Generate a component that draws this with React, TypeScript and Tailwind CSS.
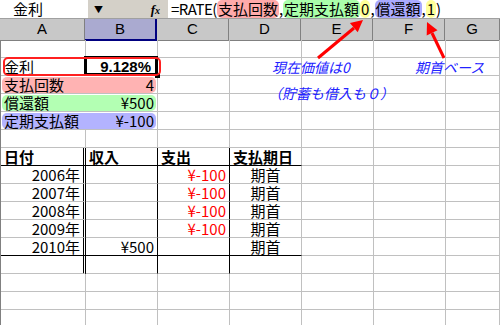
const jp = { fontFamily: '"MS PGothic", "Noto Sans CJK JP", "Liberation Sans", sans-serif' };

const cols = "grid grid-cols-[85px_72px_72px_72px_72px_72px_1fr]";

function Cell({ className = "", children }: { className?: string; children?: React.ReactNode }) {
  return (
    <div className={`h-full border-r border-b border-[#c0c0c0] px-[3px] leading-[17px] whitespace-nowrap overflow-visible ${className}`}>
      {children}
    </div>
  );
}

function EmptyRow() {
  return (
    <div className={`${cols} h-[18px]`}>
      {Array.from({ length: 7 }).map((_, i) => (
        <Cell key={i} />
      ))}
    </div>
  );
}

function Param({ label, value, bg }: { label: string; value: string; bg: string }) {
  return (
    <div className={`${cols} h-[18px]`}>
      <div className="col-span-2 h-full border-r border-b border-[#c0c0c0] px-[1px] pt-[1px]">
        <div className={`flex h-[16px] items-center justify-between rounded-[5px] px-[2px] leading-[16px] ${bg}`}>
          <span>{label}</span>
          <span>{value}</span>
        </div>
      </div>
      <Cell />
      <Cell />
      <Cell />
      <Cell />
      <Cell />
    </div>
  );
}

const years = ["2006年", "2007年", "2008年", "2009年"];

export default function App() {
  return (
    <div className="relative h-[325px] w-[500px] overflow-hidden bg-white text-[15px] text-black" style={jp}>
      {/* formula bar */}
      <div className="flex h-[19px] items-center border-b border-[#a0a0a0]">
        <div className="flex h-full w-[88px] items-center bg-white pl-[13px] text-[15px]">金利</div>
        <div className="flex h-full w-[80px] items-center justify-between bg-[#d4d0c8] pl-[6px] pr-[8px]">
          <span className="text-[9px] leading-none">▼</span>
          <span className="text-[13px] font-bold italic leading-none" style={{ fontFamily: '"Liberation Serif", serif' }}>
            f<span className="text-[10px]">x</span>
          </span>
        </div>
        <div className="flex h-full flex-1 items-center bg-white pl-[3px] text-[15px] leading-[18px]">
          <span className="tracking-[-0.5px]">=RATE(</span>
          <span className="rounded-[5px] bg-[#ffaaaa] px-[1px]">支払回数</span>
          <span>,</span>
          <span className="rounded-[5px] bg-[#aaffaa] px-[1px]">定期支払額</span>
          <span className="rounded-[5px] bg-[#ffff99] px-[1px]">0</span>
          <span>,</span>
          <span className="rounded-[5px] bg-[#aaaaff] px-[1px]">償還額</span>
          <span>,</span>
          <span className="rounded-[5px] bg-[#ffff99] px-[1px]">1</span>
          <span>)</span>
        </div>
      </div>

      {/* column headers */}
      <div className={`${cols} h-[21px] bg-[#c8c8c8] text-center leading-[20px]`} style={{ fontFamily: '"Liberation Sans", sans-serif' }}>
        {["A", "B", "C", "D", "E", "F", "G"].map((c) => (
          <div
            key={c}
            className={
              c === "B"
                ? "border-r-2 border-b-2 border-[#000080] bg-[#aaaad0]"
                : "border-r border-b border-[#808080]"
            }
          >
            {c}
          </div>
        ))}
      </div>

      {/* sheet body */}
      <div className="border-l border-[#808080]">
        <EmptyRow />

        <div className={`${cols} relative h-[18px]`}>
          <Cell>金利</Cell>
          <div className="relative h-full border-r border-b border-[#c0c0c0]">
            <div className="absolute -left-[2px] -top-[2px] -right-[1px] -bottom-[1px] border-[3px] border-black" />
            <div className="absolute -bottom-[3px] -right-[3px] h-[5px] w-[5px] bg-black" />
            <div className="relative pr-[6px] text-right font-bold leading-[17px]" style={{ fontFamily: '"Liberation Sans", sans-serif' }}>
              9.128%
            </div>
          </div>
          <Cell />
          <Cell />
          <Cell />
          <Cell />
          <Cell />
          <div className="pointer-events-none absolute left-[2px] top-[-1px] h-[19px] w-[158px] rounded-[5px] border-2 border-[#ff2020]" />
        </div>

        <Param label="支払回数" value="4" bg="bg-[#ffb3b3]" />
        <Param label="償還額" value="¥500" bg="bg-[#b3ffb3]" />
        <Param label="定期支払額" value="¥-100" bg="bg-[#b3b3ff]" />
        <EmptyRow />

        {/* table header */}
        <div className={`${cols} h-[18px] font-bold`}>
          <Cell className="border-r-[3px] border-r-black border-double border-b-black">日付</Cell>
          <Cell className="border-r-black border-b-black">収入</Cell>
          <Cell className="border-r-black border-b-black">支出</Cell>
          <Cell className="border-b-black">支払期日</Cell>
          <Cell />
          <Cell />
          <Cell />
        </div>

        {years.map((y) => (
          <div key={y} className={`${cols} h-[18px]`}>
            <Cell className="border-r-[3px] border-r-black border-double text-right">{y}</Cell>
            <Cell className="border-r-black" />
            <Cell className="border-r-black text-right text-[#ff0000]">¥-100</Cell>
            <Cell className="text-center">期首</Cell>
            <Cell />
            <Cell />
            <Cell />
          </div>
        ))}

        <div className={`${cols} h-[18px]`}>
          <Cell className="border-r-[3px] border-r-black border-double border-b-black text-right">2010年</Cell>
          <Cell className="border-r-black border-b-black text-right">¥500</Cell>
          <Cell className="border-r-black border-b-black" />
          <Cell className="border-b-black text-center">期首</Cell>
          <Cell />
          <Cell />
          <Cell />
        </div>

        <div className={`${cols} h-[18px]`}>
          <Cell className="border-r-[3px] border-r-black border-double" />
          <Cell className="border-r-black" />
          <Cell className="border-r-black" />
          <Cell />
          <Cell />
          <Cell />
          <Cell />
        </div>

        <EmptyRow />
        <EmptyRow />
        <EmptyRow />
        <EmptyRow />
      </div>

      {/* annotations */}
      <div className="absolute left-[272px] top-[58px] text-[14px] italic leading-[18px] text-[#2222ff]">現在価値は0</div>
      <div className="absolute left-[268px] top-[84px] text-[14px] italic leading-[18px] text-[#2222ff]">（貯蓄も借入も０）</div>
      <div className="absolute left-[415px] top-[58px] text-[14px] italic leading-[18px] text-[#2222ff]">期首ベース</div>

      <svg className="pointer-events-none absolute inset-0" width="500" height="325" viewBox="0 0 500 325">
        <line x1="318" y1="58" x2="354" y2="28" stroke="#ff0000" strokeWidth="3" />
        <polygon points="363,20 357.7,32.3 349.9,23.1" fill="#ff0000" />
        <line x1="444" y1="58" x2="432" y2="33" stroke="#ff0000" strokeWidth="3" />
        <polygon points="427,22 437.5,30.2 426.7,35.4" fill="#ff0000" />
      </svg>
    </div>
  );
}
